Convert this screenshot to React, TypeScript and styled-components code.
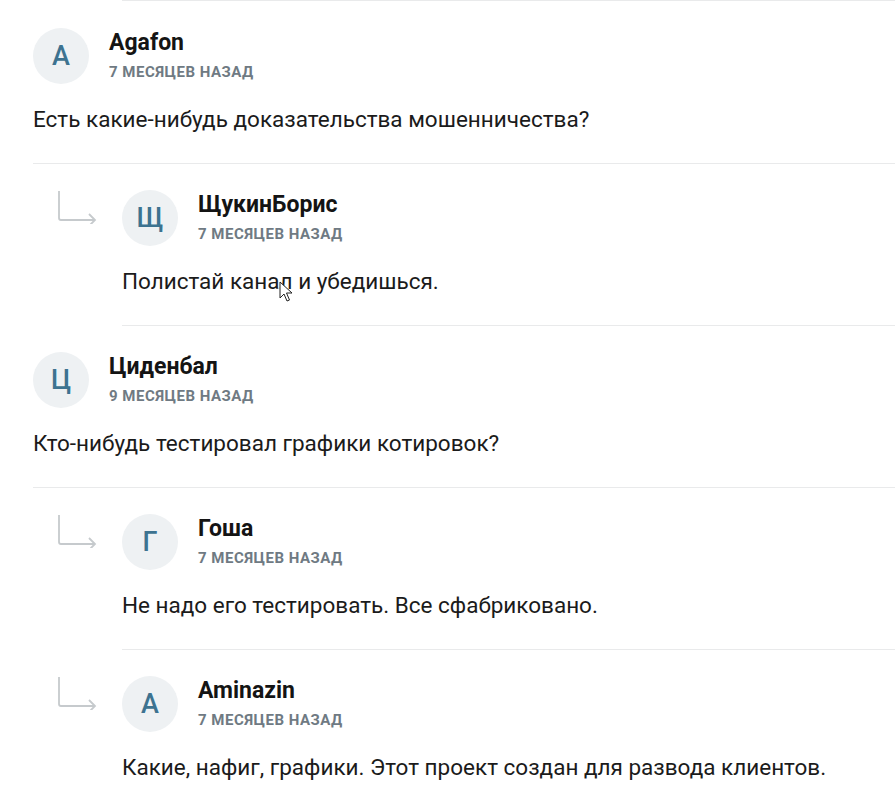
import React from "react";
import styled, { createGlobalStyle } from "styled-components";

const Global = createGlobalStyle`
  html, body { margin: 0; padding: 0; background: #ffffff; }
  body { font-family: Roboto, "Noto Sans", "Liberation Sans", sans-serif; overflow: hidden; }
`;

const Page = styled.div`
  padding-left: 33px;
  width: 862px;
  position: relative;
`;

const Edge = styled.div`
  margin-left: 89px;
  margin-bottom: 1px;
  border-top: 1px solid #e9eaeb;
`;

const Row = styled.div`
  display: flex;
  margin-top: -1px;
`;

const ArrowCell = styled.div`
  width: 89px;
  flex: none;
  padding: 27px 0 0 22px;
  box-sizing: border-box;
`;

const Block = styled.div<{ $last?: boolean }>`
  flex: 1;
  padding: 27px 0 29px;
  border-bottom: ${(p) => (p.$last ? "none" : "1px solid #e9eaeb")};
`;

const Header = styled.div`
  display: flex;
  align-items: flex-start;
  gap: 20px;
`;

const Avatar = styled.div`
  width: 56px;
  height: 56px;
  border-radius: 50%;
  background: #eef1f3;
  color: #3d7390;
  display: flex;
  align-items: center;
  justify-content: center;
  font-size: 27px;
  font-weight: 500;
  flex: none;
`;

const Meta = styled.div`
  padding-top: 2px;
  display: flex;
  flex-direction: column;
`;

const Name = styled.div`
  font-size: 23px;
  line-height: 26px;
  font-weight: 700;
  color: #141414;
`;

const Date = styled.div`
  margin-top: 7px;
  font-size: 15px;
  line-height: 18px;
  font-weight: 700;
  color: #6f7a83;
  letter-spacing: 0.5px;
  text-transform: uppercase;
`;

const Text = styled.div`
  margin-top: 20px;
  font-size: 22.5px;
  line-height: 30px;
  color: #1b1b1b;
`;

const Cursor = styled.svg`
  position: absolute;
  left: 279px;
  top: 281px;
`;

const ReplyArrow = () => (
  <svg width="44" height="34" viewBox="0 0 44 34" fill="none">
    <path d="M4 1 V28 Q4 30 6 30 H40" stroke="#c6cacd" strokeWidth="1.8" />
    <path d="M34 24 L40 30 L34 36" stroke="#c6cacd" strokeWidth="1.8" />
  </svg>
);

type Item = { name: string; letter: string; date: string; text: string; reply?: boolean; last?: boolean };

const items: Item[] = [
  { name: "Agafon", letter: "A", date: "7 месяцев назад", text: "Есть какие-нибудь доказательства мошенничества?" },
  { name: "ЩукинБорис", letter: "Щ", date: "7 месяцев назад", text: "Полистай канал и убедишься.", reply: true },
  { name: "Циденбал", letter: "Ц", date: "9 месяцев назад", text: "Кто-нибудь тестировал графики котировок?" },
  { name: "Гоша", letter: "Г", date: "7 месяцев назад", text: "Не надо его тестировать. Все сфабриковано.", reply: true },
  { name: "Aminazin", letter: "A", date: "7 месяцев назад", text: "Какие, нафиг, графики. Этот проект создан для развода клиентов.", reply: true, last: true },
];

export default function App() {
  return (
    <>
      <Global />
      <Page>
        <Edge />
        {items.map((it, i) => (
          <Row key={i}>
            {it.reply && (
              <ArrowCell>
                <ReplyArrow />
              </ArrowCell>
            )}
            <Block $last={it.last}>
              <Header>
                <Avatar>{it.letter}</Avatar>
                <Meta>
                  <Name>{it.name}</Name>
                  <Date>{it.date}</Date>
                </Meta>
              </Header>
              <Text>{it.text}</Text>
            </Block>
          </Row>
        ))}
        <Cursor width="14" height="22" viewBox="0 0 14 22">
          <path d="M1 1 V17 L5 13 L8 20 L10.5 19 L7.5 12 L13 12 Z" fill="#ffffff" stroke="#222" strokeWidth="1" />
        </Cursor>
      </Page>
    </>
  );
}
